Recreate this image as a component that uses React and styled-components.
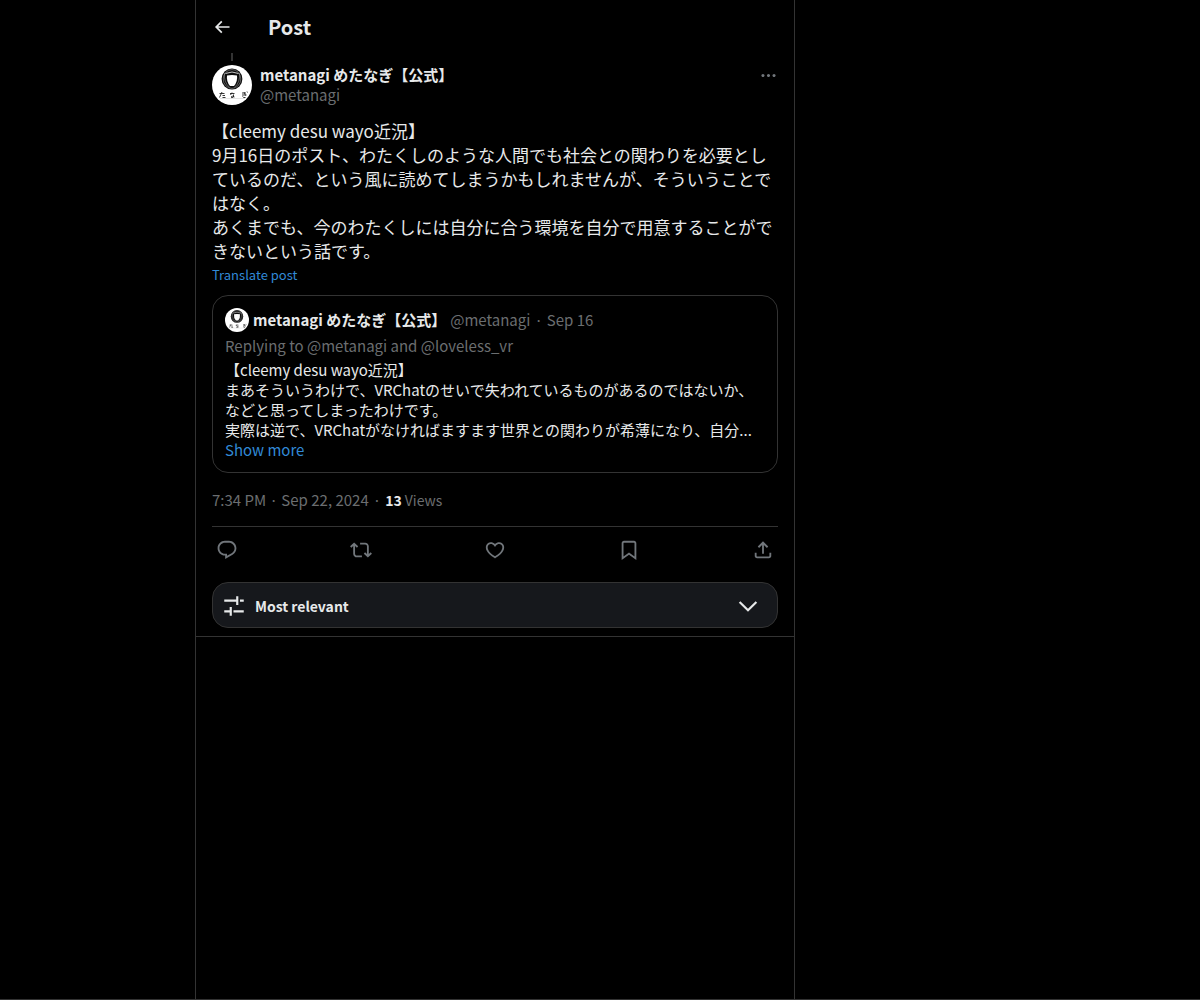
import React, { useState } from "react";
import styled, { createGlobalStyle } from "styled-components";

const GlobalStyle = createGlobalStyle`
  * {
    box-sizing: border-box;
  }

  body {
    margin: 0;
    background: #000;
    color: #e7e9ea;
    font-family: "Noto Sans CJK JP", sans-serif;
    font-size: 15px;
    line-height: 20px;
  }

  button {
    padding: 0;
    border: 0;
    background: none;
    color: inherit;
    font: inherit;
    cursor: pointer;
  }

  a {
    color: inherit;
    text-decoration: none;
  }
`;

const Page = styled.div`
  display: grid;
  grid-template-columns: 195px minmax(0, 600px) 1fr;
  min-height: 100vh;
  border-bottom: 1px solid #333;
`;

const Column = styled.main`
  grid-column: 2;
  border-left: 1px solid #333;
  border-right: 1px solid #333;
`;

const Header = styled.header`
  display: flex;
  align-items: center;
  height: 53px;
  padding: 0 16px;
`;

const BackButton = styled.button`
  display: flex;
  width: 56px;
`;

const Title = styled.h1`
  margin: 0;
  font-size: 20px;
  line-height: 24px;
  font-weight: 700;
`;

const Svg = styled.svg`
  display: block;
  flex: none;
  width: ${(props) => props.$size}px;
  height: ${(props) => props.$size}px;
  fill: currentColor;
`;

const Post = styled.article`
  padding: 0 16px 8px;
  border-bottom: 1px solid #333;
`;

const ThreadLine = styled.div`
  width: 2px;
  height: 8px;
  margin: 0 0 4px 19px;
  background: #333;
`;

const AuthorRow = styled.div`
  display: flex;
  gap: 8px;
`;

const AuthorNames = styled.div`
  display: flex;
  flex: 1;
  flex-direction: column;
  min-width: 0;
`;

const Name = styled.a`
  font-weight: 700;
`;

const Muted = styled.span`
  color: #6b6e70;
`;

const MoreButton = styled.button`
  display: flex;
  align-items: center;
  height: 20px;
  color: #71767b;
`;

const PostText = styled.p`
  margin: 14px 0 4px;
  font-size: 17px;
  line-height: 24px;
`;

const TranslateButton = styled.button`
  display: block;
  color: #3189d6;
  font-size: 13px;
  line-height: 16px;
`;

const Quote = styled.section`
  margin-top: 12px;
  padding: 12px;
  border: 1px solid #333;
  border-radius: 16px;
`;

const QuoteHead = styled.div`
  display: flex;
  align-items: center;
  gap: 4px;
  margin-bottom: 4px;
`;

const QuoteText = styled.p`
  margin: 4px 0 0;
`;

const ShowMore = styled.button`
  display: block;
  color: #3189d6;
`;

const Meta = styled.div`
  display: flex;
  gap: 4px;
  margin-top: 16px;
  padding-bottom: 15px;
  border-bottom: 1px solid #333;
  color: #6b6e70;
  line-height: 22px;
`;

const Views = styled.span`
  font-size: 14px;

  strong {
    color: #e7e9ea;
    font-weight: 700;
  }
`;

const Actions = styled.div`
  display: flex;
  justify-content: space-between;
  height: 47px;
  padding-bottom: 2px;
  color: #71767b;
`;

const ActionButton = styled.button`
  display: flex;
  align-items: center;
  justify-content: center;
  width: 30px;
`;

const SortButton = styled.button`
  display: flex;
  align-items: center;
  gap: 8px;
  width: 100%;
  height: 46px;
  margin-top: 8px;
  padding: 2px 16px 0 8px;
  border: 1px solid #333;
  border-radius: 16px;
  background: #16181c;
  font-size: 14px;
  font-weight: 700;
  text-align: left;
`;

const SortLabel = styled.span`
  flex: 1;
`;

const icons = {
  back: "M7.414 13l5.043 5.04-1.414 1.42L3.586 12l7.457-7.46 1.414 1.42L7.414 11H21v2H7.414z",
  more: "M3 12c0-1.1.9-2 2-2s2 .9 2 2-.9 2-2 2-2-.9-2-2zm9 2c1.1 0 2-.9 2-2s-.9-2-2-2-2 .9-2 2 .9 2 2 2zm7 0c1.1 0 2-.9 2-2s-.9-2-2-2-2 .9-2 2 .9 2 2 2z",
  reply:
    "M1.751 10c0-4.42 3.584-8 8.005-8h4.366c4.49 0 8.129 3.64 8.129 8.13 0 2.96-1.607 5.68-4.196 7.11l-8.054 4.46v-3.69h-.067c-4.49.1-8.183-3.51-8.183-8.01zm8.005-6c-3.317 0-6.005 2.69-6.005 6 0 3.37 2.77 6.08 6.138 6.01l.351-.01h1.761v2.3l5.087-2.81c1.951-1.08 3.163-3.13 3.163-5.36 0-3.39-2.744-6.13-6.129-6.13H9.756z",
  repost:
    "M4.5 3.88l4.432 4.14-1.364 1.46L5.5 7.55V16c0 1.1.896 2 2 2H13v2H7.5c-2.209 0-4-1.79-4-4V7.55L1.432 9.48.068 8.02 4.5 3.88zM16.5 6H11V4h5.5c2.209 0 4 1.79 4 4v8.45l2.068-1.93 1.364 1.46-4.432 4.14-4.432-4.14 1.364-1.46 2.068 1.93V8c0-1.1-.896-2-2-2z",
  like: "M16.697 5.5c-1.222-.06-2.679.51-3.89 2.16l-.805 1.09-.806-1.09C9.984 6.01 8.526 5.44 7.304 5.5c-1.243.07-2.349.78-2.91 1.91-.552 1.12-.633 2.78.479 4.82 1.074 1.97 3.257 4.27 7.129 6.61 3.87-2.34 6.052-4.64 7.126-6.61 1.111-2.04 1.03-3.7.477-4.82-.561-1.13-1.666-1.84-2.908-1.91zm4.187 7.69c-1.351 2.48-4.001 5.12-8.379 7.67l-.503.3-.504-.3c-4.379-2.55-7.029-5.19-8.382-7.67-1.36-2.5-1.41-4.86-.514-6.67.887-1.79 2.647-2.91 4.601-3.01 1.651-.09 3.368.56 4.798 2.01 1.429-1.45 3.146-2.1 4.796-2.01 1.954.1 3.714 1.22 4.601 3.01.896 1.81.846 4.17-.514 6.67z",
  bookmark:
    "M4 4.5C4 3.12 5.119 2 6.5 2h11C18.881 2 20 3.12 20 4.5v18.44l-8-5.71-8 5.71V4.5zM6.5 4c-.276 0-.5.22-.5.5v14.56l6-4.29 6 4.29V4.5c0-.28-.224-.5-.5-.5h-11z",
  share:
    "M12 2.59l5.7 5.7-1.41 1.42L13 6.41V16h-2V6.41l-3.3 3.3-1.41-1.42L12 2.59zM21 15l-.02 3.51c0 1.38-1.12 2.49-2.5 2.49H5.5C4.11 21 3 19.88 3 18.5V15h2v3.5c0 .28.22.5.5.5h12.98c.28 0 .5-.22.5-.5L19 15h2z",
  sort: "M14 6V3h2v8h-2V8H3V6h11zm7 2h-3.5V6H21v2zM8 16v-3h2v8H8v-3H3v-2h5zm13 2h-9.5v-2H21v2z",
  chevron: "M3.543 8.96l1.414-1.42L12 14.59l7.043-7.05 1.414 1.42L12 17.41 3.543 8.96z",
};

const actions = [
  { icon: "reply", label: "Reply" },
  { icon: "repost", label: "Repost" },
  { icon: "like", label: "Like" },
  { icon: "bookmark", label: "Bookmark" },
  { icon: "share", label: "Share post" },
];

const Icon = ({ name, size }) => (
  <Svg viewBox="0 0 24 24" $size={size} aria-hidden="true">
    <path d={icons[name]} />
  </Svg>
);

const Avatar = ({ size }) => (
  <Svg viewBox="0 0 40 40" $size={size} aria-hidden="true">
    <circle cx="20" cy="20" r="20" fill="#fff" />
    <ellipse cx="20" cy="14" rx="10.4" ry="10.6" fill="#0c0c0c" />
    <g fill="none" stroke="#aaa" strokeWidth="0.5">
      <ellipse cx="20" cy="14" rx="8.800" ry="9.400" />
      <path d="M12.500 8q-1 9 5 14.500M27.500 8q1 9-5 14.500" />
    </g>
    <path
      d="M15 10.500q5-1.200 10 0 .8 6-3 10.500h-4q-3.800-4.500-3-10.500z"
      fill="#fff"
    />
    <path d="M13.500 8.500q6.500-3 13 0" fill="none" stroke="#ddd" strokeWidth="0.9" />
    {/* た な ぎ lettering under the emblem */}
    <g fill="none" stroke="#222" strokeWidth="0.9">
      <path d="M7.500 28.500h5M10 27l-2.500 5.500M10.500 30.500h2.500M10.500 32.500h3" />
      <path d="M18 28.500h4.500M20 27.500l-1.500 2.500M21.500 29.500v2.500q-2 1.500-2.500 0 1-1.500 3.500 0" />
      <path d="M30 28h4M30 30h4.500M32 27l1.500 3.500M30.500 31.500q1 1.500 3 1M35 26.500l.5 1" />
    </g>
    <path d="M8 33.500h25" stroke="#bbb" strokeWidth="0.4" />
  </Svg>
);

const App = () => {
  const [liked, setLiked] = useState(false);

  return (
    <>
      <GlobalStyle />
      <Page>
        <Column>
          <Header>
            <BackButton type="button" aria-label="Back">
              <Icon name="back" size={20} />
            </BackButton>
            <Title>Post</Title>
          </Header>
          <Post>
            <ThreadLine />
            <AuthorRow>
              <Avatar size={40} />
              <AuthorNames>
                <Name href="#profile">metanagi めたなぎ【公式】</Name>
                <Muted>@metanagi</Muted>
              </AuthorNames>
              <MoreButton type="button" aria-label="More">
                <Icon name="more" size={19} />
              </MoreButton>
            </AuthorRow>
            <PostText lang="ja">
              【cleemy desu wayo近況】
              <br />
              9月16日のポスト、わたくしのような人間でも社会との関わりを必要としているのだ、という風に読めてしまうかもしれませんが、そういうことではなく。
              <br />
              あくまでも、今のわたくしには自分に合う環境を自分で用意することができないという話です。
            </PostText>
            <TranslateButton type="button">Translate post</TranslateButton>
            <Quote>
              <QuoteHead>
                <Avatar size={24} />
                <Name href="#profile">metanagi めたなぎ【公式】</Name>
                <Muted>@metanagi</Muted>
                <Muted>·</Muted>
                <Muted>Sep 16</Muted>
              </QuoteHead>
              <Muted as="div">Replying to @metanagi and @loveless_vr</Muted>
              <QuoteText lang="ja">
                【cleemy desu wayo近況】
                <br />
                まあそういうわけで、VRChatのせいで失われているものがあるのではないか、などと思ってしまったわけです。
                <br />
                実際は逆で、VRChatがなければますます世界との関わりが希薄になり、自分...
              </QuoteText>
              <ShowMore type="button">Show more</ShowMore>
            </Quote>
            <Meta>
              <span>7:34 PM · Sep 22, 2024</span>
              <span>·</span>
              <Views>
                <strong>13</strong> Views
              </Views>
            </Meta>
            <Actions>
              {actions.map(({ icon, label }) => (
                <ActionButton
                  key={icon}
                  type="button"
                  aria-label={label}
                  aria-pressed={icon === "like" ? liked : undefined}
                  onClick={icon === "like" ? () => setLiked(!liked) : undefined}
                >
                  <Icon name={icon} size={22} />
                </ActionButton>
              ))}
            </Actions>
            <SortButton type="button">
              <Icon name="sort" size={26} />
              <SortLabel>Most relevant</SortLabel>
              <Icon name="chevron" size={26} />
            </SortButton>
          </Post>
        </Column>
      </Page>
    </>
  );
};

export default App;
